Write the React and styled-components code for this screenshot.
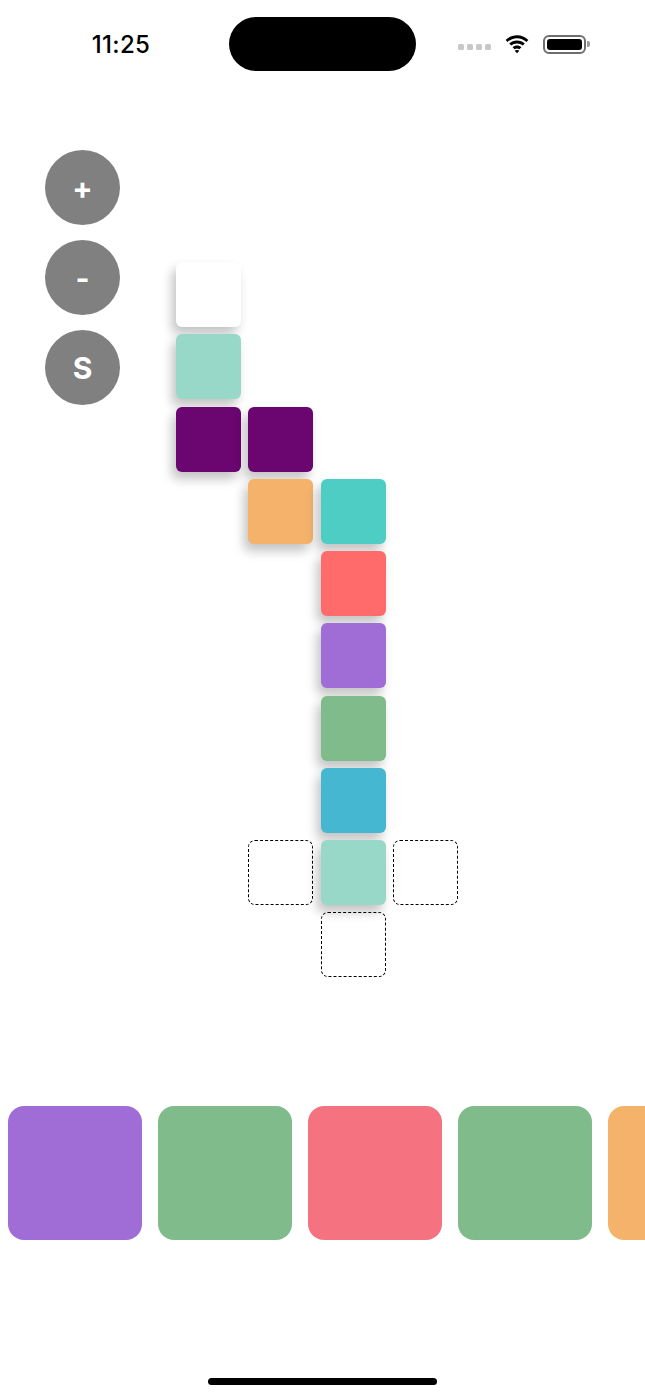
import React from 'react'
import styled, { createGlobalStyle } from 'styled-components';

const GlobalStyle = createGlobalStyle`
  html, body {
    margin: 0;
    padding: 0;
    background: #ffffff;
  }
  body {
    font-family: Inter, "Noto Sans", sans-serif;
  }
`;

const placed = [
  { col: 1, row: 1, color: '#ffffff' },
  { col: 1, row: 2, color: '#98d8c8' },
  { col: 1, row: 3, color: '#6b0570' },
  { col: 2, row: 3, color: '#6b0570' },
  { col: 2, row: 4, color: '#f5b26b' },
  { col: 3, row: 4, color: '#4ecdc4' },
  { col: 3, row: 5, color: '#ff6b6b' },
  { col: 3, row: 6, color: '#a06cd5' },
  { col: 3, row: 7, color: '#80bb8b' },
  { col: 3, row: 8, color: '#45b7d1' },
  { col: 3, row: 9, color: '#98d8c8' },
];

const slots = [
  { col: 2, row: 9 },
  { col: 4, row: 9 },
  { col: 3, row: 10 },
];

const trayColors = ['#a06cd5', '#80bb8b', '#f57380', '#80bb8b', '#f5b26b'];

const App = () => {
  return <>
    <GlobalStyle />
    <Page>
      <StatusBar>
        <Time>11:25</Time>
        <Island />
        <StatusIcons>
          <Signal>
            {[0, 1, 2, 3].map((i) => <Dot key={i} />)}
          </Signal>
          <svg width="26" height="20" viewBox="0 0 26 20">
            <path d="M13 4.2c3.6 0 6.9 1.4 9.4 3.7l2-2C21.3 3 17.3 1.3 13 1.3S4.7 3 1.6 5.9l2 2C6.1 5.6 9.4 4.2 13 4.2z" fill="#000" />
            <path d="M13 9.4c2.2 0 4.2.8 5.8 2.2l2-2.1C18.7 7.6 16 6.5 13 6.5s-5.7 1.1-7.8 3l2 2.1c1.6-1.4 3.6-2.2 5.8-2.2z" fill="#000" />
            <path d="M13 14.4c.9 0 1.8.3 2.4.9l2-2.1c-1.2-1.1-2.7-1.7-4.4-1.7s-3.2.6-4.4 1.7l2 2.1c.6-.6 1.5-.9 2.4-.9z" fill="#000" />
            <path d="M13 19.2l2.3-2.4c-.6-.5-1.4-.8-2.3-.8s-1.7.3-2.3.8z" fill="#000" />
          </svg>
          <Battery>
            <BatteryBody>
              <BatteryLevel />
            </BatteryBody>
            <BatteryNub />
          </Battery>
        </StatusIcons>
      </StatusBar>

      <Board>
        <Controls>
          <RoundButton>+</RoundButton>
          <RoundButton>-</RoundButton>
          <RoundButton>S</RoundButton>
        </Controls>
        <Grid>
          {placed.map((tile, index) => (
            <Tile key={index} $col={tile.col} $row={tile.row} $color={tile.color} />
          ))}
          {slots.map((slot, index) => (
            <Slot key={`s${index}`} $col={slot.col} $row={slot.row} />
          ))}
        </Grid>
      </Board>

      <Tray>
        {trayColors.map((color, index) => (
          <TrayTile key={index} $color={color} />
        ))}
      </Tray>

      <HomeBar />
    </Page>
  </>
}

const Page = styled.div`
  width: 645px;
  height: 1398px;
  display: flex;
  flex-direction: column;
  overflow: hidden;
  background: #fff;
`;

const StatusBar = styled.header`
  height: 54px;
  margin-top: 17px;
  display: flex;
  align-items: center;
`;

const Time = styled.span`
  width: 242px;
  text-align: center;
  font-size: 24px;
  font-weight: 500;
  color: #000;
  letter-spacing: 0.3px;
`;

const Island = styled.div`
  margin-left: -13px;
  width: 187px;
  height: 54px;
  border-radius: 27px;
  background: #000;
`;

const StatusIcons = styled.div`
  margin-left: 42px;
  display: flex;
  align-items: center;
  gap: 13px;
`;

const Signal = styled.div`
  display: flex;
  gap: 3px;
  margin-top: 6px;
`;

const Dot = styled.span`
  width: 6px;
  height: 6px;
  border-radius: 1.5px;
  background: #c8c8c8;
`;

const Battery = styled.div`
  display: flex;
  align-items: center;
  gap: 1px;
`;

const BatteryBody = styled.div`
  width: 43px;
  height: 19px;
  box-sizing: border-box;
  border: 2px solid #6e6e6e;
  border-radius: 6px;
  padding: 2px;
`;

const BatteryLevel = styled.div`
  width: 100%;
  height: 100%;
  background: #000;
  border-radius: 3px;
`;

const BatteryNub = styled.div`
  width: 2.5px;
  height: 6px;
  background: #9a9a9a;
  border-radius: 0 2px 2px 0;
`;

const Board = styled.main`
  height: 1035px;
  display: flex;
  align-items: flex-start;
  padding: 79px 0 0 45px;
  box-sizing: border-box;
`;

const Controls = styled.div`
  display: flex;
  flex-direction: column;
  gap: 15px;
`;

const RoundButton = styled.button`
  width: 75px;
  height: 75px;
  border-radius: 50%;
  border: none;
  background: #808080;
  color: #fff;
  font-family: Inter, "Noto Sans", sans-serif;
  font-size: 30px;
  font-weight: 700;
  display: flex;
  align-items: center;
  justify-content: center;
  padding: 0;
  cursor: pointer;
`;

const Grid = styled.div`
  margin: 112px 0 0 56px;
  display: grid;
  grid-template-columns: repeat(4, 65px);
  grid-template-rows: repeat(10, 65px);
  gap: 7.25px;
`;

const Tile = styled.div`
  grid-column: ${({ $col }) => $col};
  grid-row: ${({ $row }) => $row};
  background: ${({ $color }) => $color};
  border-radius: 6px;
  box-shadow: -4px 7px 11px rgba(0, 0, 0, 0.24);
`;

const Slot = styled.div`
  grid-column: ${({ $col }) => $col};
  grid-row: ${({ $row }) => $row};
  border: 1.3px dashed #000;
  border-radius: 7px;
  box-sizing: border-box;
`;

const Tray = styled.section`
  display: flex;
  gap: 16px;
  padding-left: 8px;
  height: 134px;
`;

const TrayTile = styled.div`
  flex: 0 0 134px;
  height: 134px;
  border-radius: 16px;
  background: ${({ $color }) => $color};
`;

const HomeBar = styled.div`
  width: 229px;
  height: 7px;
  border-radius: 4px;
  background: #000;
  margin: 138px auto 0;
`;

export default App
